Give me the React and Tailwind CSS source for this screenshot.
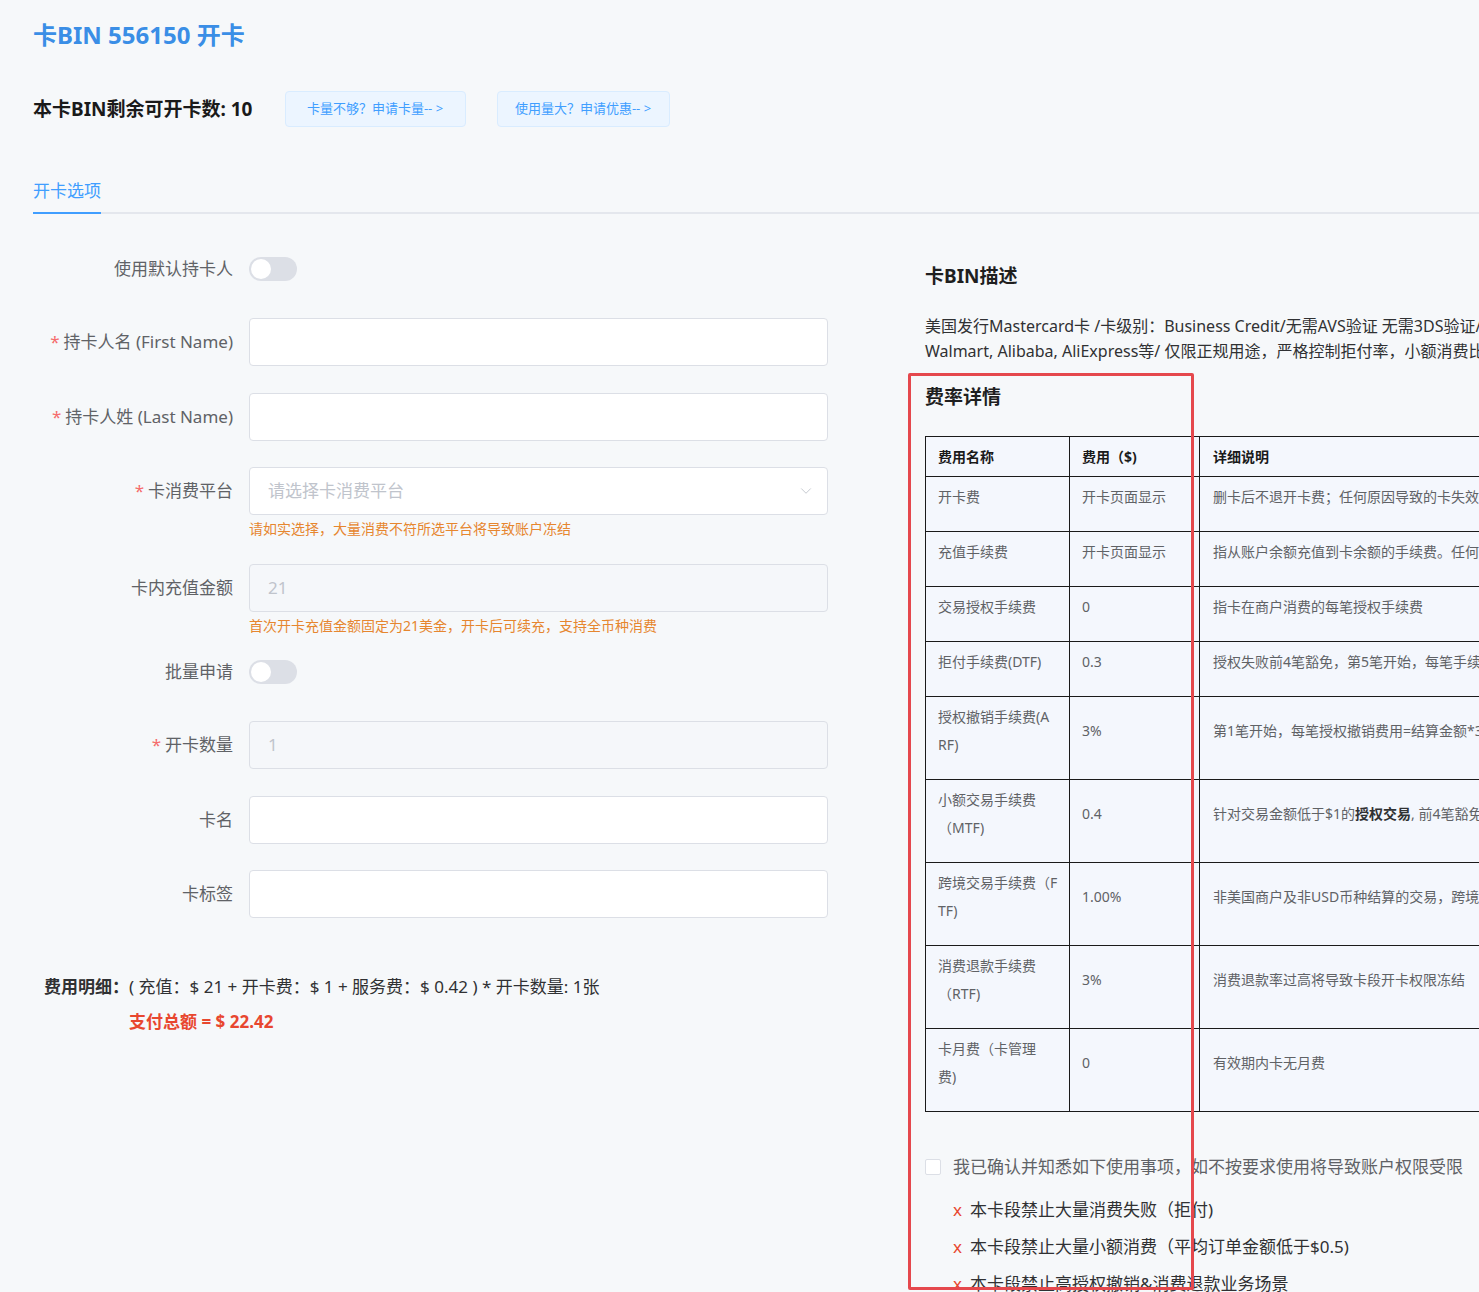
import { ChevronDown } from "lucide-react";

const feeRows = [
  { name: ["开卡费"], fee: "开卡页面显示", desc: "删卡后不退开卡费；任何原因导致的卡失效，开卡费均不予退还" },
  { name: ["充值手续费"], fee: "开卡页面显示", desc: "指从账户余额充值到卡余额的手续费。任何情况下充值手续费均不退还" },
  { name: ["交易授权手续费"], fee: "0", desc: "指卡在商户消费的每笔授权手续费" },
  { name: ["拒付手续费(DTF)"], fee: "0.3", desc: "授权失败前4笔豁免，第5笔开始，每笔手续费0.3美元" },
  { name: ["授权撤销手续费(A", "RF)"], fee: "3%", desc: "第1笔开始，每笔授权撤销费用=结算金额*3%" },
  {
    name: ["小额交易手续费", "（MTF)"],
    fee: "0.4",
    desc: (
      <>
        针对交易金额低于$1的<b className="text-[#303133]">授权交易</b>, 前4笔豁免，第5笔开始收取
      </>
    ),
  },
  { name: ["跨境交易手续费（F", "TF)"], fee: "1.00%", desc: "非美国商户及非USD币种结算的交易，跨境交易手续费为结算金额的1%" },
  { name: ["消费退款手续费", "（RTF)"], fee: "3%", desc: "消费退款率过高将导致卡段开卡权限冻结" },
  { name: ["卡月费（卡管理", "费)"], fee: "0", desc: "有效期内卡无月费" },
];

const Toggle = () => (
  <div className="w-[48px] h-[24px] rounded-full bg-[#dcdfe6] p-[2px] flex items-center">
    <div className="w-[20px] h-[20px] rounded-full bg-white" />
  </div>
);

const Label = ({ required, children }) => (
  <div className="w-[200px] shrink-0 text-right text-[17px] text-[#606266] leading-[24px] whitespace-nowrap">
    {required && <span className="text-[#f56c6c] mr-[4px]">*</span>}
    {children}
  </div>
);

const Row = ({ label, required, children, className = "" }) => (
  <div className={`flex items-center h-[48px] ${className}`}>
    <Label required={required}>{label}</Label>
    <div className="ml-[16px]">{children}</div>
  </div>
);

const Input = ({ disabled, value }) => (
  <div
    className={`w-[579px] h-[48px] rounded-[4px] border border-[#dcdfe6] flex items-center px-[18px] text-[17px] ${
      disabled ? "bg-[#f5f7fa] text-[#c0c4cc]" : "bg-white"
    }`}
  >
    {value}
  </div>
);

const Hint = ({ children }) => (
  <div className="ml-[216px] mt-[4px] text-[14px] leading-[20px] text-[#e6862f] whitespace-nowrap">{children}</div>
);

export default function App() {
  return (
    <div className="relative w-full h-[1292px] overflow-hidden bg-[#f6f8fa] font-['Noto_Sans','Noto_Sans_CJK_SC',sans-serif]">
      <div className="pl-[33px] pt-[19px]">
        {/* 标题 */}
        <h1 className="text-[24px] leading-[32px] font-bold text-[#3a8ee6]">卡BIN 556150 开卡</h1>

        {/* 剩余卡数 */}
        <div className="mt-[40px] flex items-center">
          <div className="text-[19px] font-bold text-[#1a1a1a] leading-[28px] whitespace-nowrap">本卡BIN剩余可开卡数: 10</div>
          <button className="ml-[32px] w-[181px] h-[36px] rounded-[4px] bg-[#ecf5ff] border border-[#d9ecff] text-[13px] text-[#409eff] whitespace-nowrap">
            卡量不够？申请卡量-- &gt;
          </button>
          <button className="ml-[31px] w-[173px] h-[36px] rounded-[4px] bg-[#ecf5ff] border border-[#d9ecff] text-[13px] text-[#409eff] whitespace-nowrap">
            使用量大？申请优惠-- &gt;
          </button>
        </div>

        {/* 选项卡 */}
        <div className="mt-[52px] border-b-2 border-[#e4e7ed]">
          <div className="inline-block whitespace-nowrap text-[17px] leading-[24px] text-[#409eff] pb-[9px] border-b-2 border-[#409eff] -mb-[2px]">
            开卡选项
          </div>
        </div>
      </div>

      <div className="flex pl-[33px]">
        {/* 表单 */}
        <div className="w-[795px] shrink-0">
          <Row label="使用默认持卡人" className="mt-[31px]">
            <Toggle />
          </Row>
          <Row label="持卡人名 (First Name)" required className="mt-[25px]">
            <Input />
          </Row>
          <Row label="持卡人姓 (Last Name)" required className="mt-[27px]">
            <Input />
          </Row>
          <Row label="卡消费平台" required className="mt-[26px]">
            <div className="w-[579px] h-[48px] rounded-[4px] border border-[#dcdfe6] bg-white flex items-center justify-between pl-[18px] pr-[12px] text-[17px] text-[#c0c4cc]">
              请选择卡消费平台
              <ChevronDown size={18} strokeWidth={1.2} className="text-[#c0c4cc]" />
            </div>
          </Row>
          <Hint>请如实选择，大量消费不符所选平台将导致账户冻结</Hint>
          <Row label="卡内充值金额" className="mt-[25px]">
            <Input disabled value="21" />
          </Row>
          <Hint>首次开卡充值金额固定为21美金，开卡后可续充，支持全币种消费</Hint>
          <Row label="批量申请" className="mt-[12px]">
            <Toggle />
          </Row>
          <Row label="开卡数量" required className="mt-[25px]">
            <Input disabled value="1" />
          </Row>
          <Row label="卡名" className="mt-[27px]">
            <Input />
          </Row>
          <Row label="卡标签" className="mt-[26px]">
            <Input />
          </Row>

          {/* 费用 */}
          <div className="mt-[57px] ml-[11px] text-[17px] leading-[24px] text-[#303133] whitespace-nowrap">
            <span className="font-bold">费用明细：</span>( 充值：$ 21 + 开卡费：$ 1 + 服务费：$ 0.42 ) * 开卡数量: 1张
          </div>
          <div className="mt-[11px] ml-[96px] text-[17px] leading-[24px] font-bold text-[#e8472f]">
            支付总额 = $ 22.42
          </div>
        </div>

        {/* 卡BIN描述 */}
        <div className="ml-[97px] w-[920px] shrink-0">
          <h2 className="mt-[49px] text-[19px] leading-[26px] font-bold text-[#1f1f1f]">卡BIN描述</h2>
          <div className="mt-[25px] text-[16px] leading-[25px] text-[#303133] whitespace-nowrap">
            <div>美国发行Mastercard卡 /卡级别：Business Credit/无需AVS验证 无需3DS验证/适用于Amazon, eBay,</div>
            <div>Walmart, Alibaba, AliExpress等/ 仅限正规用途，严格控制拒付率，小额消费比例</div>
          </div>

          <h2 className="mt-[20px] text-[19px] leading-[26px] font-bold text-[#1f1f1f]">费率详情</h2>

          <table className="mt-[26px] w-[920px] table-fixed border-collapse bg-[#f4f7fd] text-[14px]">
            <colgroup>
              <col className="w-[144px]" />
              <col className="w-[130px]" />
              <col />
            </colgroup>
            <thead>
              <tr>
                <th className="h-[40px] px-[12px] border border-[#1a1a1a] text-left font-bold text-[#1a1a1a] align-middle">费用名称</th>
                <th className="h-[40px] px-[12px] border border-[#1a1a1a] text-left font-bold text-[#1a1a1a] align-middle">费用（$)</th>
                <th className="h-[40px] px-[13px] border border-[#1a1a1a] text-left font-bold text-[#1a1a1a] align-middle">详细说明</th>
              </tr>
            </thead>
            <tbody>
              {feeRows.map((r) => (
                <tr key={r.name.join("")}>
                  <td className="px-[12px] pt-[6px] pb-[20px] border border-[#1a1a1a] leading-[28px] text-[#606266] align-middle whitespace-nowrap">
                    {r.name.map((l) => (
                      <div key={l}>{l}</div>
                    ))}
                  </td>
                  <td className="px-[12px] pt-[6px] pb-[20px] border border-[#1a1a1a] leading-[28px] text-[#606266] align-middle">
                    {r.fee}
                  </td>
                  <td className="px-[13px] pt-[6px] pb-[20px] border border-[#1a1a1a] leading-[28px] text-[#606266] align-middle whitespace-nowrap">
                    {r.desc}
                  </td>
                </tr>
              ))}
            </tbody>
          </table>

          {/* 确认 */}
          <div className="mt-[43px] flex items-center text-[17px] leading-[24px] text-[#606266] whitespace-nowrap">
            <span className="w-[16px] h-[16px] rounded-[2px] border border-[#dcdfe6] bg-white" />
            <span className="ml-[12px]">我已确认并知悉如下使用事项，如不按要求使用将导致账户权限受限</span>
          </div>
          <ul className="mt-[12px] ml-[28px] text-[17px] leading-[37px] text-[#303133] whitespace-nowrap">
            <li>
              <span className="text-[#e8472f] mr-[8px]">x</span>本卡段禁止大量消费失败（拒付)
            </li>
            <li>
              <span className="text-[#e8472f] mr-[8px]">x</span>本卡段禁止大量小额消费（平均订单金额低于$0.5)
            </li>
            <li>
              <span className="text-[#e8472f] mr-[8px]">x</span>本卡段禁止高授权撤销&amp;消费退款业务场景
            </li>
          </ul>
        </div>
      </div>

      {/* 标注框 */}
      <div className="absolute left-[908px] top-[373px] w-[286px] h-[917px] border-[3px] border-[#e5484d] rounded-[2px] pointer-events-none" />
    </div>
  );
}
